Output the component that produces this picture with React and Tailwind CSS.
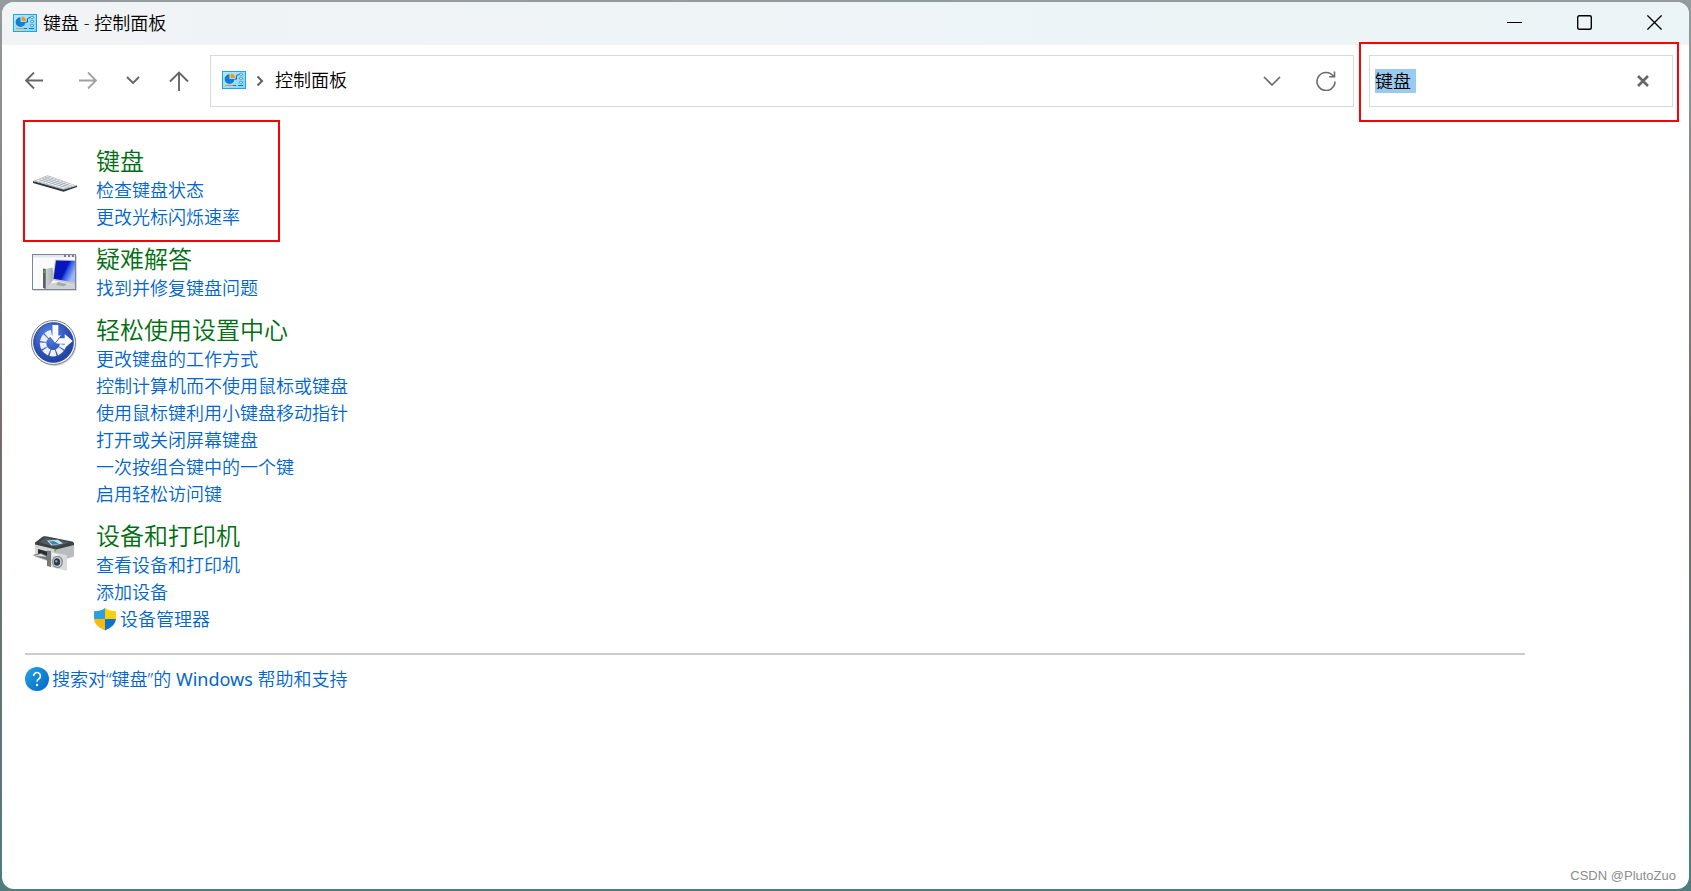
import React, { useEffect, useRef, useState } from 'react';

const PanelIcon = () => (
    <svg width="24" height="18" viewBox="0 0 24 18" className="shrink-0" aria-hidden="true">
        <defs>
            <linearGradient id="panelFill" x1="0" y1="0" x2="1" y2="1">
                <stop offset="0" stopColor="#b5e9fb" />
                <stop offset="1" stopColor="#86d3f7" />
            </linearGradient>
        </defs>
        <rect x="0.5" y="0.5" width="23" height="17" fill="url(#panelFill)" stroke="#1fa5e3" />
        <path d="M7.5 8V3.2A4.9 4.9 0 1 0 12.4 8Z" fill="#0f7fd6" />
        <path d="M8.6 7V2.6A4.6 4.6 0 0 1 13 7Z" fill="#f7931e" />
        <path d="M12.5 8.2h2V5l1-1.2h1.5" fill="none" stroke="#1b5f96" />
        <rect x="17.4" y="2.4" width="3.2" height="2" rx="1" fill="#d6f3fd" stroke="#1c83cf" strokeWidth="0.8" />
        <rect x="17.4" y="6.4" width="3.2" height="2" rx="1" fill="#d6f3fd" stroke="#1c83cf" strokeWidth="0.8" />
        <rect x="17.4" y="10.4" width="3.2" height="2" rx="1" fill="#d6f3fd" stroke="#1c83cf" strokeWidth="0.8" />
        <path d="M3 14.5h8" stroke="#f0941f" />
        <path d="M11 14.5h3M16 14.5h5" stroke="#1674c0" />
    </svg>
);

const KeyboardIcon = () => (
    <svg width="48" height="48" viewBox="0 0 48 48" aria-hidden="true">
        <path d="M3 31 33.5 39 47 35.5v1.5L33.5 41.8 3 33Z" fill="#2f363a" />
        <path d="M3 31 17.5 25.2 47 35.7 33.5 39.8Z" fill="#b4bbc1" />
        <path d="M6 30.8 17.5 26.2 44.5 35.6 33.5 38.6Z" fill="#f4f6f8" />
        <path d="M9.2 29.7 36.5 37.6M12.2 28.4 39.2 36.9M15 27.3 42 36.2" stroke="#929ca6" strokeWidth="0.6" />
        <path
            d="M9 31.6l11-4.6M12.5 32.6l10.8-4.5M16 33.6l10.5-4.4M19.5 34.6l10-4.3M23 35.5l10-4.2M26.5 36.5l9.5-4M30 37.5l9-3.8"
            stroke="#929ca6" strokeWidth="0.6"
        />
    </svg>
);

const TroubleshootIcon = () => (
    <svg width="48" height="48" viewBox="0 0 48 48" aria-hidden="true">
        <defs>
            <linearGradient id="screen" x1="0" y1="0" x2="1" y2="0.5">
                <stop offset="0" stopColor="#0a1ba8" />
                <stop offset="0.6" stopColor="#0614c4" />
                <stop offset="0.7" stopColor="#2d55e0" />
                <stop offset="1" stopColor="#9db8f4" />
            </linearGradient>
            <linearGradient id="tower" x1="0" y1="0" x2="1" y2="0">
                <stop offset="0" stopColor="#d2d5d7" />
                <stop offset="1" stopColor="#a2a8ab" />
            </linearGradient>
        </defs>
        <rect x="3.5" y="7.5" width="43.5" height="35.5" fill="#d4d6d9" />
        <rect x="2.5" y="6.5" width="43" height="35" fill="#fafbfc" stroke="#7d8593" />
        <path d="M3 7h42v2.5H3Z" fill="#e3e7ee" />
        <path d="M34 8h2M38 8h2M42 8h2" stroke="#596375" strokeWidth="1.3" />
        <path d="M15.5 21 22.5 19.5 24 31 20 36v4l-4.5 1Z" fill="url(#tower)" />
        <path d="M13 20.5 15.8 21v20L13 40Z" fill="#5c6266" />
        <path d="M14.5 22.5v2.5" stroke="#35d028" strokeWidth="1.6" />
        <path d="M25 11.5 45 12V37L22.3 32Z" fill="#c6cacd" />
        <path d="M26 12.5 45 13V34.5L23.5 30.8Z" fill="url(#screen)" />
        <path d="M20 35.5 29 34l16 3v4H16Z" fill="#cfd3d5" />
        <path d="M28 34 37 36 34 38.5 26 37Z" fill="#a6acb0" />
    </svg>
);

const EaseOfAccessIcon = () => (
    <svg width="48" height="48" viewBox="0 0 48 48" aria-hidden="true">
        <defs>
            <radialGradient id="easeFill" cx="0.4" cy="0.3" r="0.8">
                <stop offset="0" stopColor="#5a86e2" />
                <stop offset="0.6" stopColor="#2b50b8" />
                <stop offset="1" stopColor="#213c99" />
            </radialGradient>
        </defs>
        <circle cx="24.5" cy="25" r="22" fill="#cfd1d3" />
        <circle cx="23.5" cy="23.5" r="22" fill="#f4f5f6" stroke="#7b8187" />
        <circle cx="23.5" cy="23.5" r="19.8" fill="url(#easeFill)" stroke="#2444a2" />
        <path
            d="M21.5 14.3A10 10 0 1 0 33 25.5"
            fill="none" stroke="#eef0f4" strokeWidth="6.5" strokeDasharray="5.6 1.1"
        />
        <path d="M22.5 6h5.8v10.5h3L25.3 24l-6-7.5h3.2Z" fill="#fff" />
        <path d="M25.3 24 29 19.3h5.7V15l8 7-8 7v-4.2H29Z" fill="#fff" />
        <path d="M31.3 16.5 25.3 24" stroke="#2c50b4" strokeWidth="0.8" />
    </svg>
);

const PrinterIcon = () => (
    <svg width="48" height="48" viewBox="0 0 48 48" aria-hidden="true">
        <path d="M5 18 18 11.5 44 18v13.5L24 38 6 32Z" fill="#b9bdc0" />
        <path d="M5 18 24 23.5V38L5 32Z" fill="#d3d6d8" />
        <path d="M5 17.5 13 11.5Q14 11 15.5 11.3L42 16.5Q44.5 17.5 44 20L26 24.5 5 19.5Z" fill="#3c4144" />
        <path d="M9 17.2 15.5 12.6 39 17.2 26 22Z" fill="#565c60" />
        <path d="M17 15.5 28 14.8 33 18.5 21.5 20.5Z" fill="#bfe1f4" />
        <path d="M19 16.5 24 16l5 2.8-6.5 1Z" fill="#3f86a8" />
        <path d="M8 24 19 27v6L8 30Z" fill="#292d30" />
        <path d="M2.5 30 11 28l8 3.5V35l-1 .5Z" fill="#71777b" />
        <path d="M4.5 30.4 11 29l6 3Z" fill="#e4e6e7" />
        <circle cx="25" cy="25.5" r="1.1" fill="#36c84b" />
        <path d="M17 25.5 21 26V42l-4-1Z" fill="#77797b" />
        <path d="M21 27 36 30Q37 30.5 37 31.5V44.5Q36.5 46 35 45.5L21 42Z" fill="#d9dbdc" />
        <path d="M22 28.3 28 29.5v1.7l-6-1.2Z" fill="#f8f8f8" />
        <ellipse cx="27.5" cy="37" rx="5.5" ry="6.2" fill="#8b9195" />
        <ellipse cx="27.3" cy="37" rx="4.2" ry="4.8" fill="#d4d7d9" />
        <ellipse cx="27" cy="37" rx="3.2" ry="3.8" fill="#2e3a42" />
        <circle cx="26.3" cy="36.2" r="1.2" fill="#6ba7bd" />
    </svg>
);

const ShieldIcon = () => (
    <svg width="22" height="24" viewBox="0 0 22 24" className="shrink-0" aria-hidden="true">
        <clipPath id="shieldShape">
            <path d="M11 0C8 2.2 4.5 3.2 0 3.3V10C0 16 4.5 19.5 11 22.5 17.5 19.5 22 16 22 10V3.3C17.5 3.2 14 2.2 11 0Z" />
        </clipPath>
        <g clipPath="url(#shieldShape)">
            <path d="M0 0h11v11H0Z" fill="#2b9fe3" />
            <path d="M11 0h11v11H11Z" fill="#fdd006" />
            <path d="M0 11h11v12H0Z" fill="#fdb90a" />
            <path d="M11 11h11v12H11Z" fill="#0c74cf" />
        </g>
    </svg>
);

const HelpIcon = () => (
    <svg width="24" height="24" viewBox="0 0 24 24" className="shrink-0" aria-hidden="true">
        <defs>
            <linearGradient id="helpFill" x1="0" y1="0" x2="1" y2="1">
                <stop offset="0" stopColor="#27a3e6" />
                <stop offset="1" stopColor="#0067c4" />
            </linearGradient>
        </defs>
        <circle cx="12" cy="12" r="12" fill="url(#helpFill)" />
        <path d="M8.6 9a3.4 3.4 0 1 1 5.5 2.6c-1.3 1-2.1 1.6-2.1 3.2" fill="none" stroke="#fff" strokeWidth="1.6" />
        <circle cx="12" cy="18" r="1.2" fill="#fff" />
    </svg>
);

const categories = [
    {
        title: '键盘',
        icon: KeyboardIcon,
        marked: true,
        links: [{ label: '检查键盘状态' }, { label: '更改光标闪烁速率' }],
    },
    {
        title: '疑难解答',
        icon: TroubleshootIcon,
        links: [{ label: '找到并修复键盘问题' }],
    },
    {
        title: '轻松使用设置中心',
        icon: EaseOfAccessIcon,
        links: [
            { label: '更改键盘的工作方式' },
            { label: '控制计算机而不使用鼠标或键盘' },
            { label: '使用鼠标键利用小键盘移动指针' },
            { label: '打开或关闭屏幕键盘' },
            { label: '一次按组合键中的一个键' },
            { label: '启用轻松访问键' },
        ],
    },
    {
        title: '设备和打印机',
        icon: PrinterIcon,
        links: [{ label: '查看设备和打印机' }, { label: '添加设备' }, { label: '设备管理器', shield: true }],
    },
];

const TitleBar = () => (
    <header className="flex h-[43px] items-center bg-linear-to-r from-[#f1f3f5] via-[#eef4f7] to-[#ebf4f6] pb-0.5">
        <div className="flex flex-1 items-center gap-1.5 pl-[11px]">
            <PanelIcon />
            <h1>键盘 - 控制面板</h1>
        </div>
        <button aria-label="最小化" className="flex h-full w-[70px] items-center justify-center">
            <svg width="15" height="15" viewBox="0 0 15 15"><path d="M0 7.5h15" stroke="#000" /></svg>
        </button>
        <button aria-label="最大化" className="flex h-full w-[70px] items-center justify-center">
            <svg width="15" height="15" viewBox="0 0 15 15">
                <rect x="0.7" y="0.7" width="13.6" height="13.6" rx="1.5" fill="none" stroke="#000" strokeWidth="1.4" />
            </svg>
        </button>
        <button aria-label="关闭" className="flex h-full w-[70px] items-center justify-center">
            <svg width="15" height="15" viewBox="0 0 15 15">
                <path d="M0.4 0.4 14.6 14.6M14.6 0.4 0.4 14.6" stroke="#000" strokeWidth="1.3" />
            </svg>
        </button>
    </header>
);

const Toolbar = () => {
    const [query, setQuery] = useState('键盘 ');
    const searchRef = useRef(null);

    useEffect(() => {
        searchRef.current.focus();
        searchRef.current.select();
    }, []);

    return (
        <div className="flex items-center pt-2.5 pr-4 pl-[5px]">
            {/* Navigation */}
            <nav className="mr-[3px] flex h-[52px] items-center text-[#666666]">
                <button aria-label="后退" className="flex h-full w-[54px] items-center justify-center">
                    <svg width="18" height="18" viewBox="0 0 18 18" fill="none" stroke="currentColor" strokeWidth="1.8">
                        <path d="M18 8.5H1M9 0.5l-8 8 8 8" />
                    </svg>
                </button>
                <button aria-label="前进" className="flex h-full w-[54px] items-center justify-center text-[#a0a0a0]">
                    <svg width="18" height="18" viewBox="0 0 18 18" fill="none" stroke="currentColor" strokeWidth="1.8">
                        <path d="M0 8.5h17M9 0.5l8 8-8 8" />
                    </svg>
                </button>
                <button aria-label="最近浏览的位置" className="flex h-full w-9 items-center justify-center pb-0.5">
                    <svg width="14" height="8" viewBox="0 0 14 8" fill="none" stroke="currentColor" strokeWidth="1.9">
                        <path d="M1 1l6 6 6-6" />
                    </svg>
                </button>
                <button aria-label="上移" className="flex h-full w-14 items-center justify-center">
                    <svg width="20" height="20" viewBox="0 0 20 20" fill="none" stroke="currentColor" strokeWidth="1.9">
                        <path d="M10 20V1.5M1 10.5l9-9 9 9" />
                    </svg>
                </button>
            </nav>

            {/* Address */}
            <div className="mr-[15px] flex h-[52px] flex-1 items-center border border-[#d9d9d9] pl-[11px]">
                <div className="flex flex-1 items-center pb-0.5">
                    <PanelIcon />
                    <svg width="29" height="12" viewBox="0 0 29 12" fill="none" stroke="#606060" strokeWidth="2" aria-hidden="true">
                        <path d="M11.5 2.5l4.5 4.5-4.5 4.5" />
                    </svg>
                    <a href="#home">控制面板</a>
                </div>
                <button aria-label="以前的位置" className="flex h-full w-[52px] items-center justify-center pl-0.5">
                    <svg width="18" height="10" viewBox="0 0 18 10" fill="none" stroke="#666666" strokeWidth="1.6">
                        <path d="M1 1l8 8 8-8" />
                    </svg>
                </button>
                <button aria-label="刷新" className="flex h-full w-14 items-center justify-center pl-0.5">
                    <svg width="20" height="20" viewBox="0 0 20 20" fill="none" stroke="#6b6b6b" strokeWidth="1.6">
                        <path d="M17.5 5.5A9 9 0 1 0 19 10.5M18.5 0.5v5.3h-5.3" />
                    </svg>
                </button>
            </div>

            {/* Search */}
            <div className="relative flex h-[52px] w-[304px] items-center border border-[#d9d9d9]">
                <input
                    ref={searchRef}
                    type="text"
                    aria-label="搜索控制面板"
                    value={query}
                    onChange={(e) => setQuery(e.target.value)}
                    className="h-6 min-w-0 flex-1 pl-[5px] leading-6 outline-none selection:bg-[#9bcaef] selection:text-black"
                />
                <button aria-label="清除" onClick={() => setQuery('')} className="flex h-full w-[58px] items-center justify-center">
                    <svg width="12" height="12" viewBox="0 0 12 12" stroke="#666666" strokeWidth="2.6">
                        <path d="M1 1l10 10M11 1 1 11" />
                    </svg>
                </button>
                <div className="pointer-events-none absolute -top-3.5 -right-[7px] -bottom-4 -left-[11px] border-2 border-[#ff0000]" />
            </div>
        </div>
    );
};

const Category = ({ title, icon: Icon, links, marked }) => (
    <section className="relative flex gap-4">
        <div className="mt-1 size-12 shrink-0">
            <Icon />
        </div>
        <div>
            <h2 className="mb-px pl-0.5 text-2xl leading-[30px] text-[#006e12]">{title}</h2>
            <ul>
                {links.map(({ label, shield }) => (
                    <li key={label} className="h-[27px] leading-[27px]">
                        {shield ? (
                            <a href="#device-manager" className="flex items-center gap-1 hover:underline">
                                <ShieldIcon />
                                {label}
                            </a>
                        ) : (
                            <a href="#task" className="pl-0.5 hover:underline">{label}</a>
                        )}
                    </li>
                ))}
            </ul>
        </div>
        {marked && (
            <div className="pointer-events-none absolute -top-[26px] -bottom-[11px] -left-[7px] w-[257px] border-2 border-[#ff0000]" />
        )}
    </section>
);

export default function App() {
    return (
        <div className="flex min-h-screen bg-linear-to-b from-[#949b9d] via-[#756d69] to-[#4f7c7d] p-0.5 font-['Open_Sans','Noto_Sans_CJK_SC',sans-serif] text-lg leading-6 font-[350] text-black">
            <div className="relative flex flex-1 flex-col overflow-hidden rounded-xl bg-white">
                <TitleBar />
                <Toolbar />

                {/* Results */}
                <main className="mt-[39px] pr-[164px] pl-[23px] text-[#0066cc]">
                    <div className="flex flex-col gap-[13px] pl-[5px]">
                        {categories.map((category) => (
                            <Category key={category.title} {...category} />
                        ))}
                    </div>
                    <hr className="mt-5 border-t-2 border-[#cccccc]" />
                    <a href="#help" className="mt-3 flex items-center gap-[3px] hover:underline">
                        <HelpIcon />
                        <span className="font-['Noto_Sans','Noto_Sans_CJK_SC',sans-serif]">
                            搜索对“键盘”的 <span className="font-normal">Windows</span> 帮助和支持
                        </span>
                    </a>
                </main>

                <div className="absolute right-[13px] bottom-px font-['Liberation_Sans',sans-serif] text-[13px] font-normal text-[#8c8c8c]">
                    CSDN @PlutoZuo
                </div>
            </div>
        </div>
    );
}
